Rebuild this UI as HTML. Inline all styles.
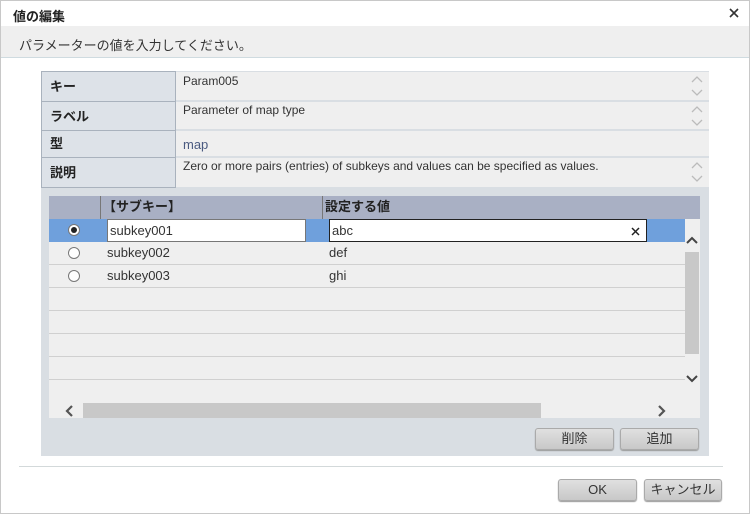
<!DOCTYPE html>
<html><head><meta charset="utf-8"><style>
*{box-sizing:border-box;margin:0;padding:0}
body{width:750px;height:514px;background:#fff;font-family:"Liberation Sans","Noto Sans CJK JP",sans-serif;font-size:12px;color:#333;position:relative;overflow:hidden}
.a{position:absolute}
.frame{left:0;top:0;width:750px;height:514px;border:1px solid #c8c8c8}
.btn{position:absolute;height:22px;border:1px solid #aaa;border-radius:3px;background:linear-gradient(#e0e0e0,#c8c8c8);text-align:center;line-height:20px;font-size:13px;color:#333;box-shadow:0 1px 1px #999}
.lab{left:41px;width:135px;background:#dde2e8;border:1px solid #a9b2bd;font-weight:bold;font-size:13px;padding-left:8px;color:#222}
.val{left:176px;width:533px;background:#efefef;padding-left:7px;font-size:12px;color:#333}
.ar{position:absolute;left:690px}
.row{position:absolute;left:49px;width:636px;height:23px;border-bottom:1px solid #d0d0d0;font-size:13px}
.rad{position:absolute;left:19px;top:5px;width:12px;height:12px;border:1px solid #777;border-radius:50%;background:#fff}
</style></head><body>
<div class="a frame"></div>
<div class="a" style="left:13px;top:6px;font-weight:bold;font-size:13px;color:#222">値の編集</div>
<svg class="a" style="left:729px;top:8px" width="10" height="10"><path d="M1 1L9 9M9 1L1 9" stroke="#333" stroke-width="1.6"/></svg>
<div class="a" style="left:1px;top:26px;width:748px;height:32px;background:#efefef;border-bottom:1px solid #cfdbe0"></div>
<div class="a" style="left:19px;top:35px;font-size:13px;color:#333">パラメーターの値を入力してください。</div>

<div class="a" style="left:41px;top:71px;width:668px;height:385px;background:#d9dee3"></div>
<div class="a lab" style="top:71px;height:31px;line-height:30px">キー</div>
<div class="a lab" style="top:101px;height:30px;line-height:30px">ラベル</div>
<div class="a lab" style="top:130px;height:28px;line-height:26px">型</div>
<div class="a lab" style="top:157px;height:31px;line-height:30px">説明</div>
<div class="a val" style="top:72px;height:28px;padding-top:2px;width:510px">Param005</div>
<div class="a val" style="top:102px;height:27px;padding-top:1px;width:510px">Parameter of map type</div>
<div class="a val" style="top:131px;height:25px;line-height:27px;font-size:13px;color:#4a5a80">map</div>
<div class="a val" style="top:158px;height:29px;padding-top:1px;width:510px">Zero or more pairs (entries) of subkeys and values can be specified as values.</div>
<div class="a" style="left:686px;top:72px;width:23px;height:28px;background:#efefef"></div>
<div class="a" style="left:686px;top:102px;width:23px;height:27px;background:#efefef"></div>
<div class="a" style="left:686px;top:158px;width:23px;height:29px;background:#efefef"></div>
<svg class="ar" style="top:74px" width="14" height="24"><path d="M2 8L7 3L12 8M2 16L7 21L12 16" fill="none" stroke="#bbb" stroke-width="1.3"/></svg>
<svg class="ar" style="top:104px" width="14" height="24"><path d="M2 8L7 3L12 8M2 16L7 21L12 16" fill="none" stroke="#bbb" stroke-width="1.3"/></svg>
<svg class="ar" style="top:160px" width="14" height="24"><path d="M2 8L7 3L12 8M2 16L7 21L12 16" fill="none" stroke="#bbb" stroke-width="1.3"/></svg>

<div class="a" style="left:49px;top:196px;width:651px;height:222px;background:#efefef"></div>
<div class="a" style="left:49px;top:196px;width:651px;height:23px;background:#a9b0c4;font-weight:bold;font-size:13px;color:#222">
<div class="a" style="left:51px;top:0;height:23px;border-left:1px solid #777;padding-left:2px;line-height:22px">【サブキー】</div>
<div class="a" style="left:273px;top:0;height:23px;border-left:1px solid #777;padding-left:2px;line-height:22px">設定する値</div>
</div>
<div class="row" style="top:219px;background:#6fa0dc;border-bottom:1px solid #6fa0dc"><div class="rad"><div class="a" style="left:2px;top:2px;width:6px;height:6px;border-radius:50%;background:#222"></div></div>
<div class="a" style="left:58px;top:0;width:199px;height:23px;background:#fff;border:1px solid #777;padding-left:2px;line-height:21px">subkey001</div>
<div class="a" style="left:280px;top:0;width:318px;height:23px;background:#fff;border:1px solid #222;padding-left:2px;line-height:21px">abc<svg style="position:absolute;right:6px;top:7px" width="9" height="9"><path d="M1 1L8 8M8 1L1 8" stroke="#222" stroke-width="1.5"/></svg></div></div>
<div class="row" style="top:242px"><div class="rad"></div><span class="a" style="left:58px;top:3px">subkey002</span><span class="a" style="left:280px;top:3px">def</span></div>
<div class="row" style="top:265px"><div class="rad"></div><span class="a" style="left:58px;top:3px">subkey003</span><span class="a" style="left:280px;top:3px">ghi</span></div>
<div class="row" style="top:288px"></div>
<div class="row" style="top:311px"></div>
<div class="row" style="top:334px"></div>
<div class="row" style="top:357px"></div>
<div class="a" style="left:685px;top:219px;width:15px;height:184px;background:#efefef"></div>
<div class="a" style="left:685px;top:252px;width:14px;height:102px;background:#c8c8c8"></div>
<svg class="a" style="left:685px;top:234px" width="14" height="12"><path d="M2 9L7 4L12 9" fill="none" stroke="#444" stroke-width="2"/></svg>
<svg class="a" style="left:685px;top:373px" width="14" height="12"><path d="M2 3L7 8L12 3" fill="none" stroke="#444" stroke-width="2"/></svg>
<div class="a" style="left:83px;top:403px;width:458px;height:15px;background:#c8c8c8"></div>
<svg class="a" style="left:64px;top:404px" width="12" height="14"><path d="M8 2L3 7L8 12" fill="none" stroke="#555" stroke-width="2.2"/></svg>
<svg class="a" style="left:655px;top:404px" width="12" height="14"><path d="M4 2L9 7L4 12" fill="none" stroke="#555" stroke-width="2.2"/></svg>

<div class="btn" style="left:535px;top:428px;width:79px">削除</div>
<div class="btn" style="left:620px;top:428px;width:79px">追加</div>
<div class="a" style="left:19px;top:466px;width:704px;height:1px;background:#d3d9da"></div>
<div class="btn" style="left:558px;top:479px;width:79px">OK</div>
<div class="btn" style="left:644px;top:479px;width:78px">キャンセル</div>
</body></html>
